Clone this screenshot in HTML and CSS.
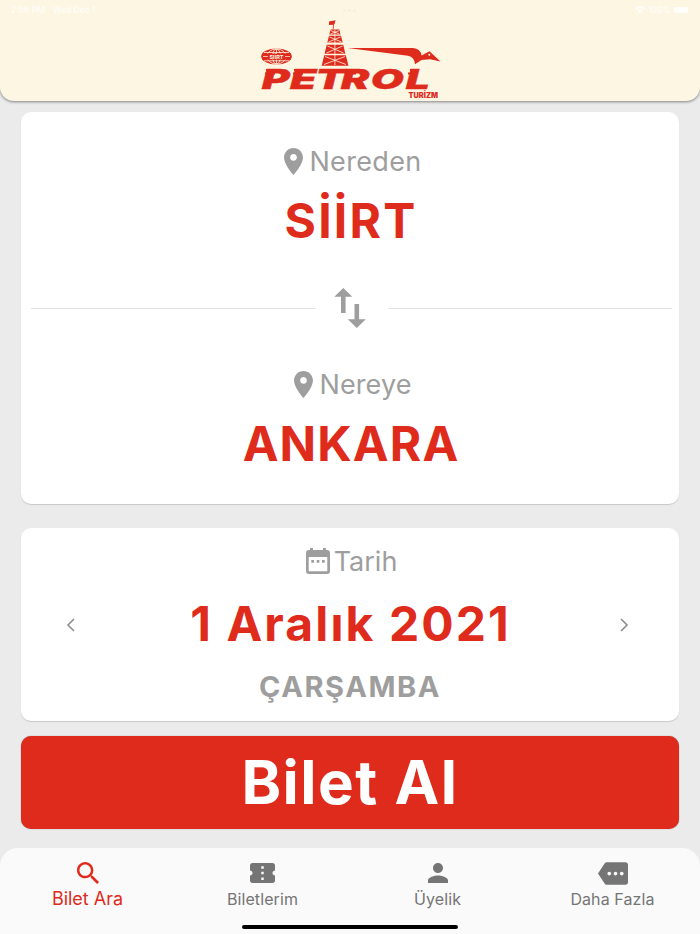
FILE: index.html
```html
<!DOCTYPE html>
<html lang="tr">
<head>
    <meta charset="UTF-8">
    <meta name="viewport" content="width=device-width, initial-scale=1.0">
    <title>Petrol Turizm</title>
    <link rel="stylesheet" href="styles.css">
</head>
<body>
    <header class="header">
        <div class="status">
            <div class="status-left"><span>2:56 PM</span><span>Wed Dec 1</span></div>
            <div class="status-dots"><i></i><i></i><i></i></div>
            <div class="status-right">
                <svg width="10" height="8" viewBox="0 0 24 19"><path d="M12 19l4-5c-2-2-6-2-8 0zM5 10l2.500 3c3-2.500 6-2.500 9 0L19 10c-4-4-10-4-14 0zM0 5l3 3.500c5-5 13-5 18 0L24 5C17-1.500 7-1.500 0 5z"/></svg>
                <span>100%</span>
                <span class="battery"></span>
            </div>
        </div>
        <svg class="logo" width="200" height="90" viewBox="0 0 200 90">
            <!-- globe -->
            <ellipse cx="26.500" cy="46.500" rx="15.300" ry="8" fill="#df2b1c"/>
            <g fill="none" stroke="#fdf6e3" stroke-width=".8">
                <ellipse cx="26.500" cy="46.500" rx="9.500" ry="7.600"/>
                <ellipse cx="26.500" cy="46.500" rx="4" ry="7.600"/>
                <path d="M26.500 39v15M14 42.500h25M14 50.800h25"/>
            </g>
            <rect x="12" y="43.700" width="29" height="5.800" fill="#df2b1c"/>
            <path d="M13 46.500h5M35 46.500h5" stroke="#fdf6e3" stroke-width=".7"/>
            <text class="logo-globe" x="19.500" y="48.500" textLength="14" lengthAdjust="spacingAndGlyphs">SİİRT</text>
            <!-- derrick -->
            <path d="M79 11.500l6.500-1.200-1 4-.6.200-.4 5h-.8l.300-4.800-4 .4z" fill="#df2b1c"/>
            <path d="M80.500 19.500h9l1 5h-11.200zM79 25.800h12l1.700 6.800H77.300zM76.700 34.700h16.600l2 9H74.600zM74.200 45.200h21.600l2.700 10.500H71.700z" fill="#df2b1c"/>
            <g stroke="#fdf6e3" stroke-width=".8" fill="none">
                <path d="M84.900 20v35M80.500 20.500l9 3.500M89.500 20.500l-9 3.500M79.500 27l12 5M90.500 27l-12 5M77.500 36l16 7M92.500 36l-16 7M75 46.500l21 8M95 46.500l-21 8"/>
            </g>
            <!-- swallow -->
            <path d="M97.500 38H163Q171 39 171.500 45.500L179.500 41.300 190.500 51.500 180 49.200 171.500 50 165 54.300Q164.500 47 158 45.700z" fill="#df2b1c"/>
            <circle cx="179.300" cy="44.800" r="1" fill="#fdf6e3"/>
            <path d="M16 60h14M15 63.500h10M44 60h14M43 63.500h10M73 60h12M99 60h14M98 63.500h8M160 60h8M158 63.500h8" stroke="#df2b1c" stroke-width="1.800"/>
            <text class="logo-name" transform="scale(1.580 1)" x="7.500 25.300 41.300 57.500 76.500 98.500" y="79">PETROL</text>
            <text class="logo-sub" x="158.500" y="88" textLength="29.500" lengthAdjust="spacingAndGlyphs">TURİZM</text>
        </svg>
    </header>

    <main class="content">
        <section class="card route">
            <div class="stop">
                <div class="label">
                    <svg class="pin" width="19" height="27" viewBox="5 2 14 20"><path d="M12 2C8.130 2 5 5.130 5 9c0 5.250 7 13 7 13s7-7.750 7-13c0-3.870-3.130-7-7-7zm0 9.500c-1.380 0-2.500-1.120-2.500-2.500s1.120-2.500 2.500-2.500 2.500 1.120 2.500 2.500-1.120 2.500-2.500 2.500z"/></svg>
                    <span class="nereden">Nereden</span>
                </div>
                <div class="value siirt">SİİRT</div>
            </div>
            <div class="divider">
                <hr>
                <svg width="72" height="42" viewBox="0 0 72 42"><path d="M27.300 1l9 8.800h-6.700V26H25V9.800h-6.700zM40.800 41l-9-8.800h6.700V17h4.600v15.200h6.700z"/></svg>
                <hr>
            </div>
            <div class="stop">
                <div class="label">
                    <svg class="pin" width="19" height="27" viewBox="5 2 14 20"><path d="M12 2C8.130 2 5 5.130 5 9c0 5.250 7 13 7 13s7-7.750 7-13c0-3.870-3.130-7-7-7zm0 9.500c-1.380 0-2.500-1.120-2.500-2.500s1.120-2.500 2.500-2.500 2.500 1.120 2.500 2.500-1.120 2.500-2.500 2.500z"/></svg>
                    <span class="nereye">Nereye</span>
                </div>
                <div class="value ankara">ANKARA</div>
            </div>
        </section>

        <section class="card date">
            <div class="label">
                <svg class="calendar" width="24" height="27" viewBox="0 0 24 27"><path fill-rule="evenodd" d="M3 2h1V0h3v2h10V0h3v2h1a3 3 0 0 1 3 3v18a3 3 0 0 1-3 3H3a3 3 0 0 1-3-3V5a3 3 0 0 1 3-3zM2.700 9v14.300h18.600V9zM5.300 12h2.700v2.700H5.300zM10.700 12h2.700v2.700h-2.700zM16 12h2.700v2.700H16z"/></svg>
                <span class="tarih">Tarih</span>
            </div>
            <div class="date-row">
                <svg class="arrow" width="10" height="16" viewBox="0 0 10 16"><path d="M8 2L2 8l6 6"/></svg>
                <div class="value day">1 Aralık 2021</div>
                <svg class="arrow" width="10" height="16" viewBox="0 0 10 16"><path d="M2 2l6 6-6 6"/></svg>
            </div>
            <div class="weekday">ÇARŞAMBA</div>
        </section>

        <button class="buy">Bilet Al</button>
    </main>

    <nav class="nav">
        <div class="tab active">
            <svg width="22" height="22" viewBox="3 3 17.500 17.500"><path d="M15.500 14h-.79l-.28-.27C15.410 12.590 16 11.110 16 9.500 16 5.910 13.090 3 9.500 3S3 5.910 3 9.500 5.910 16 9.500 16c1.610 0 3.090-.59 4.230-1.570l.27.28v.79l5 4.990L20.490 19l-4.990-5zm-6 0C7.010 14 5 11.990 5 9.500S7.010 5 9.500 5 14 7.010 14 9.500 11.990 14 9.500 14z"/></svg>
            <span>Bilet Ara</span>
        </div>
        <div class="tab">
            <svg width="25" height="20" viewBox="2 4 20 16" preserveAspectRatio="none"><path d="M20 12c0-1.100.9-2 2-2V6c0-1.100-.9-2-2-2H4c-1.100 0-1.990.9-1.990 2v4c1.100 0 1.990.9 1.990 2s-.89 2-2 2v4c0 1.100.9 2 2 2h16c1.100 0 2-.9 2-2v-4c-1.100 0-2-.9-2-2zm-7 5.500h-2v-2h2v2zm0-4.500h-2v-2h2v2zm0-4.500h-2v-2h2v2z"/></svg>
            <span>Biletlerim</span>
        </div>
        <div class="tab">
            <svg width="20" height="20" viewBox="4 4 16 16"><path d="M12 12c2.210 0 4-1.790 4-4s-1.790-4-4-4-4 1.790-4 4 1.790 4 4 4zm0 2c-2.670 0-8 1.340-8 4v2h16v-2c0-2.660-5.330-4-8-4z"/></svg>
            <span>Üyelik</span>
        </div>
        <div class="tab more">
            <svg width="30" height="23" viewBox="0 3 24 18"><path d="M22 3H7c-.69 0-1.230.35-1.590.88L0 12l5.410 8.110c.36.53.97.89 1.660.89H22c1.100 0 2-.9 2-2V5c0-1.100-.9-2-2-2zM9 13.500c-.83 0-1.500-.67-1.500-1.500s.67-1.500 1.500-1.500 1.500.67 1.500 1.500-.67 1.500-1.500 1.500zm5 0c-.83 0-1.500-.67-1.500-1.500s.67-1.500 1.500-1.500 1.500.67 1.500 1.500-.67 1.500-1.500 1.500zm5 0c-.83 0-1.500-.67-1.500-1.500s.67-1.500 1.500-1.500 1.500.67 1.500 1.500-.67 1.500-1.500 1.500z"/></svg>
            <span>Daha Fazla</span>
        </div>
        <div class="home-bar"></div>
    </nav>
</body>
</html>
```
FILE: styles.css
```css
* {
    margin: 0;
    padding: 0;
    box-sizing: border-box;
    font-family: Inter, "Liberation Sans", sans-serif;
}

body {
    display: flex;
    flex-direction: column;
    width: 700px;
    height: 934px;
    overflow: hidden;
    background: #ebebeb;
}

.header {
    height: 101px;
    background: #fdf6e3;
    border-radius: 0 0 14px 14px;
    box-shadow: 0 1px 3px rgba(0, 0, 0, 0.45);
}

.status {
    display: grid;
    grid-template-columns: 1fr auto 1fr;
    align-items: center;
    height: 10px;
    padding: 6px 12px 0 11px;
    color: #fffefa;
    font-size: 8.5px;
    font-weight: 500;
    line-height: 8px;
}

.status-left {
    display: flex;
    gap: 8px;
}

.status-dots {
    display: flex;
    gap: 2px;
}

.status-dots i {
    width: 3px;
    height: 3px;
    border-radius: 50%;
    background: #f8efdc;
}

.status-right {
    display: flex;
    justify-content: flex-end;
    align-items: center;
    gap: 3px;
    fill: #fffefa;
}

.battery {
    width: 14px;
    height: 6px;
    border-radius: 2px;
    background: #fffefa;
}

.logo {
    display: block;
    margin: 0 auto;
    overflow: visible;
}

.logo-name {
    fill: #df2b1c;
    stroke: #df2b1c;
    stroke-width: 0.3px;
    font-size: 27px;
    font-weight: 900;
    font-style: italic;
}

.logo-sub {
    fill: #df2b1c;
    font-size: 7px;
    font-weight: 900;
}

.logo-globe {
    fill: #fdf6e3;
    font-size: 5px;
    font-weight: 700;
}

.content {
    flex: 1;
    padding: 11px 21px 0;
}

.card {
    background: white;
    border-radius: 10px;
    box-shadow: 0 1px 1px rgba(0, 0, 0, 0.15);
}

.route {
    height: 392px;
    padding: 32px 7px 0 10px;
}

.label {
    display: flex;
    justify-content: center;
    align-items: center;
    gap: 6px;
    height: 34px;
    padding-left: 3px;
    color: #9e9e9e;
    font-size: 27px;
    fill: #9e9e9e;
}

.nereden {
    letter-spacing: 0.35px;
}

.nereye {
    letter-spacing: 0.1px;
}

.value {
    color: #df2b1c;
    font-size: 48px;
    font-weight: 700;
    line-height: 58px;
    text-align: center;
    white-space: nowrap;
}

.siirt {
    margin-top: 14px;
    padding-right: 1px;
    letter-spacing: 2.2px;
}

.ankara {
    margin-top: 14px;
    padding-right: 1px;
    letter-spacing: 1.1px;
}

.divider {
    display: flex;
    align-items: center;
    height: 42px;
    margin: 37px 0 38px;
    fill: #9e9e9e;
}

.divider hr {
    flex: 1;
    border: 0;
    border-top: 1px solid #e3e3e3;
}

.date {
    height: 193px;
    margin-top: 24px;
    padding-top: 16px;
}

.date .label {
    gap: 4px;
}

.date-row {
    display: flex;
    align-items: center;
    margin-top: 17px;
    padding: 0 50px 0 45px;
}

.arrow {
    margin-top: 2px;
    fill: none;
    stroke: #8e8e8e;
    stroke-width: 1.6;
}

.day {
    flex: 1;
    padding-left: 6px;
    letter-spacing: 2.1px;
}

.weekday {
    margin-top: 16px;
    color: #9e9e9e;
    font-size: 29px;
    font-weight: 700;
    line-height: 36px;
    letter-spacing: 1.6px;
    text-align: center;
}

.buy {
    display: block;
    width: 100%;
    height: 93px;
    margin-top: 15px;
    padding-bottom: 1px;
    border: none;
    border-radius: 10px;
    background: #df2b1c;
    box-shadow: 0 0 1px rgba(0, 0, 0, 0.5);
    color: white;
    font-size: 60px;
    font-weight: 700;
    letter-spacing: 1.5px;
}

.nav {
    position: relative;
    display: flex;
    height: 86px;
    border-radius: 18px 18px 0 0;
    background: #fafafa;
}

.tab {
    display: flex;
    flex: 1;
    flex-direction: column;
    align-items: center;
    padding-top: 15px;
    color: #757575;
    font-size: 16px;
    letter-spacing: 0.1px;
    line-height: 20px;
    fill: #757575;
}

.tab span {
    margin-top: 6px;
}

.tab.more {
    padding-top: 14px;
}

.tab.more span {
    margin-top: 4px;
}

.tab.active {
    padding-top: 14px;
    color: #df2b1c;
    font-size: 18px;
    letter-spacing: 0;
    fill: #df2b1c;
}

.tab.active span {
    margin-top: 5px;
}

.home-bar {
    position: absolute;
    bottom: 5px;
    left: 242px;
    width: 216px;
    height: 4px;
    border-radius: 2px;
    background: black;
}
```
